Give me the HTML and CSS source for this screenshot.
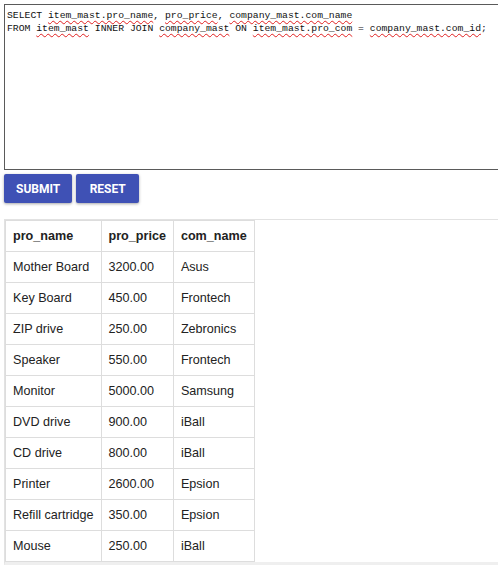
FILE: index.html
```html
<!DOCTYPE html>
<html>
<head>
<meta charset="utf-8">
<link rel="stylesheet" href="styles.css">
</head>
<body>
<div class="page">
  <div class="editor"><div class="line">SELECT <span class="sp">item_mast.pro_name</span>, <span class="sp">pro_price</span>, <span class="sp">company_mast.com_name</span></div><div class="line">FROM <span class="sp">item_mast</span> INNER JOIN <span class="sp">company_mast</span> ON <span class="sp">item_mast.pro_com</span> = <span class="sp">company_mast.com_id</span>;</div></div>
  <div class="actions">
    <button class="btn">SUBMIT</button>
    <button class="btn">RESET</button>
  </div>
  <div class="results">
    <table class="grid">
      <thead>
        <tr><th>pro_name</th><th>pro_price</th><th>com_name</th></tr>
      </thead>
      <tbody>
        <tr><td>Mother Board</td><td>3200.00</td><td>Asus</td></tr>
        <tr><td>Key Board</td><td>450.00</td><td>Frontech</td></tr>
        <tr><td>ZIP drive</td><td>250.00</td><td>Zebronics</td></tr>
        <tr><td>Speaker</td><td>550.00</td><td>Frontech</td></tr>
        <tr><td>Monitor</td><td>5000.00</td><td>Samsung</td></tr>
        <tr><td>DVD drive</td><td>900.00</td><td>iBall</td></tr>
        <tr><td>CD drive</td><td>800.00</td><td>iBall</td></tr>
        <tr><td>Printer</td><td>2600.00</td><td>Epsion</td></tr>
        <tr><td>Refill cartridge</td><td>350.00</td><td>Epsion</td></tr>
        <tr><td>Mouse</td><td>250.00</td><td>iBall</td></tr>
      </tbody>
    </table>
  </div>
</div>
</body>
</html>
```
FILE: styles.css
```css
html, body {
  margin: 0;
  padding: 0;
  overflow: hidden;
  background: #fff;
}
.page {
  padding: 4px 0 0 4px;
  width: 540px;
}
.editor {
  box-sizing: border-box;
  width: 540px;
  height: 166px;
  border: 1px solid #5a5a5a;
  padding: 4px 2px;
  font-family: "Liberation Mono", monospace;
  font-size: 9.75px;
  line-height: 13px;
  color: #111;
  white-space: pre;
}
.sp {
  text-decoration: underline wavy #e02020;
  text-decoration-thickness: 1px;
  text-underline-offset: 2px;
}
.actions {
  display: flex;
  gap: 4px;
  margin-top: 4px;
}
.btn {
  height: 29px;
  min-width: 63px;
  padding: 0 12px;
  border: none;
  border-radius: 2px;
  background: #3f51b5;
  color: #fff;
  font-family: Roboto, "Liberation Sans", sans-serif;
  font-weight: 700;
  font-size: 12px;
  letter-spacing: 0;
  box-shadow: 0 1px 3px rgba(0,0,0,0.35);
}
.results {
  margin-top: 16px;
  border-top: 1px solid #e2e2e2;
  border-left: 1px solid #e2e2e2;
  border-bottom: 4px solid #efefef;
  width: 540px;
}
.grid {
  border-collapse: collapse;
  font-family: "Liberation Sans", Arial, sans-serif;
  font-size: 12.6px;
  color: #222;
}
.grid th, .grid td {
  border: 1px solid #dddddd;
  padding: 0 7px;
  height: 30px;
  text-align: left;
  white-space: nowrap;
}
.grid th {
  font-weight: 700;
}
```
